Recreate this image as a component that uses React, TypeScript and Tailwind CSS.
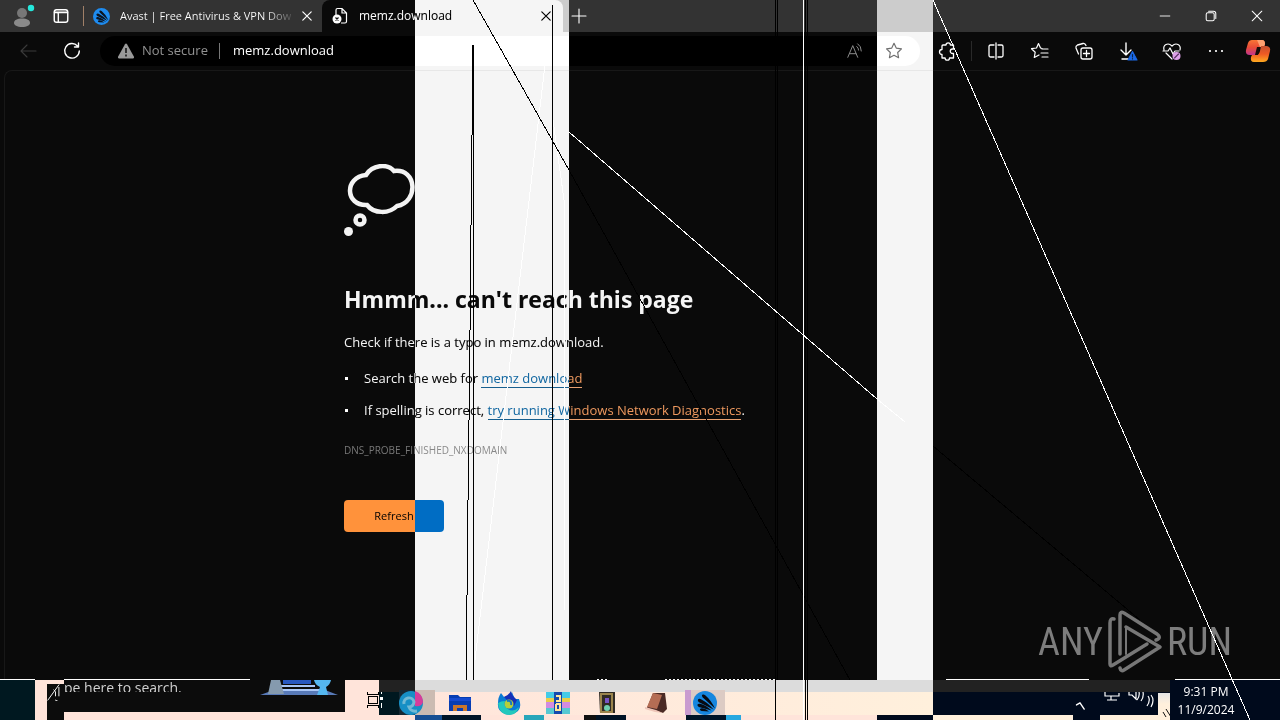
import type { ReactNode } from "react";

type IconProps = { children: ReactNode; size?: number; className?: string };

function Icon({ children, size = 20, className = "" }: IconProps) {
  return (
    <svg
      width={size}
      height={size}
      viewBox="0 0 20 20"
      fill="none"
      stroke="currentColor"
      strokeWidth="1.1"
      strokeLinecap="round"
      strokeLinejoin="round"
      className={`shrink-0 ${className}`}
      aria-hidden="true"
    >
      {children}
    </svg>
  );
}

function AvastMark({ size, fill, wing }: { size: number; fill: string; wing: string }) {
  return (
    <svg width={size} height={size} viewBox="0 0 24 24" aria-hidden="true" className="shrink-0">
      <circle cx="12" cy="12" r="12" fill={fill} />
      <g fill={wing}>
        <path d="M22 17.500L9.500 6.200Q8.200 4.500 9.600 3.600Q10.800 3 12.200 4.200Q18 9 22 17.500Z" />
        <path d="M20.500 18.500L6 11.200Q4.200 9.800 5 8.400Q6 7.200 8 8.200Q15 11.500 20.500 18.500Z" />
        <path d="M18.500 19.500L5.800 16Q4 15 4.500 13.600Q5.300 12.300 7.200 12.800Q13.500 14.500 18.500 19.500Z" />
        <path d="M16 20.500L8.500 20Q6.700 19.500 6.900 18.300Q7.500 17.100 9.200 17.300Q13 17.800 16 20.500Z" />
      </g>
    </svg>
  );
}

function TabStrip() {
  return (
    <header className="flex h-8 items-center bg-[#333333] text-xs text-white">
      <div className="flex h-full w-[83px] shrink-0 items-center gap-6 pl-3">
        <button aria-label="Profile" className="h-6 w-6">
          <svg width="24" height="24" viewBox="0 0 24 24">
            <circle cx="10" cy="9" r="5" fill="#777" />
            <path d="M2 19c0-3 3-4.500 8-4.500s8 1.500 8 4.500c0 2-3 4-8 4s-8-2-8-4z" fill="#8a8a8a" />
            <circle cx="19" cy="4" r="3.200" fill="#25e8dc" />
          </svg>
        </button>
        <button aria-label="Tab actions">
          <Icon size={18} className="-ml-2">
            <rect x="2.500" y="3" width="15" height="14" rx="2.500" strokeWidth="1.600" />
            <path d="M3 6h14" strokeWidth="2" />
            <path d="M7 7v10" strokeWidth="1.500" />
          </Icon>
        </button>
      </div>
      <div className="flex h-full w-[239px] shrink-0 items-center">
        <span className="h-5 w-px bg-[#a08068]" />
        <a href="#avast" className="flex min-w-0 flex-1 items-center gap-[10px] pl-[9px]">
          <AvastMark size={17} fill="#1e8cf0" wing="#0c1420" />
          <span className="whitespace-nowrap bg-gradient-to-r from-white from-85% to-[#555555] bg-clip-text text-[11px] text-transparent">
            Avast | Free Antivirus &amp; VPN Dow
          </span>
        </a>
        <button aria-label="Close Avast tab" className="mr-2">
          <Icon size={14}>
            <path d="M4 4l12 12M16 4L4 16" strokeWidth="1.700" />
          </Icon>
        </button>
      </div>
      <div className="flex h-full w-[241px] shrink-0 items-center rounded-t-lg bg-[#0a0a0a] pl-[10px]">
        <a href="#memz" className="flex flex-1 items-center gap-[10px]">
          <svg width="17" height="18" viewBox="0 0 17 18" fill="none" stroke="white" strokeWidth="1.200" aria-hidden="true">
            <path d="M4 8V3q0-1.500 1.500-1.500H10L14.500 6v8.500q0 1.500-1.500 1.500H9M10 1.500V6h4.500" />
            <circle cx="5" cy="12" r="4.500" fill="white" stroke="none" />
            <path d="M3.500 10.500l3 3m0-3l-3 3" stroke="#111" />
          </svg>
          memz.download
        </a>
        <button aria-label="Close tab" className="mr-[10px]">
          <Icon size={14}>
            <path d="M4 4l12 12M16 4L4 16" strokeWidth="1.700" />
          </Icon>
        </button>
      </div>
      <button aria-label="New tab" className="ml-[6px]">
        <Icon>
          <path d="M10 3v14M3 10h14" />
        </Icon>
      </button>
      <div className="ml-auto flex items-center gap-[30px] pr-[15px]">
        <button aria-label="Minimize">
          <Icon size={16}>
            <path d="M4 10h12" />
          </Icon>
        </button>
        <button aria-label="Restore">
          <Icon size={16}>
            <rect x="4" y="6" width="10" height="10" rx="2" strokeWidth="1.300" />
            <path d="M7 4h6q3 0 3 3v6" strokeWidth="1.300" />
          </Icon>
        </button>
        <button aria-label="Close window">
          <Icon size={16}>
            <path d="M4 4l12 12M16 4L4 16" strokeWidth="1.300" />
          </Icon>
        </button>
      </div>
    </header>
  );
}

function Toolbar() {
  return (
    <div className="flex h-[38px] items-center bg-[#0a0a0a] text-white">
      <button aria-label="Back" className="ml-[18px] text-[#3b3b3b]">
        <Icon>
          <path d="M18 10H3M9 4l-6 6 6 6" />
        </Icon>
      </button>
      <button aria-label="Reload" className="ml-6">
        <Icon>
          <path d="M15.500 5A7.300 7.300 0 1 0 17.300 10M16.500 2v4h-4" strokeWidth="1.400" />
        </Icon>
      </button>
      <form className="ml-[18px] flex h-[30px] flex-1 items-center rounded-full bg-black pl-[17px]">
        <svg width="18" height="18" viewBox="0 0 18 18" aria-hidden="true">
          <path d="M9 1.500Q9.600 1.500 10 2.200L17 14.700Q17.400 16.200 16 16.500H2Q.6 16.200 1 14.700L8 2.200Q8.400 1.500 9 1.500Z" fill="#9a9a9a" />
          <path d="M9 6v5M9 12.500v2" stroke="#111" strokeWidth="1.500" />
        </svg>
        <span className="ml-[7px] w-[68px] whitespace-nowrap text-[13px] text-[#929292]">Not secure</span>
        <span className="ml-[9px] h-4 w-px bg-[#777]" />
        <input
          aria-label="Address"
          defaultValue="memz.download"
          className="ml-[13px] min-w-0 flex-1 bg-transparent text-[13px] outline-none"
        />
        <button type="button" aria-label="Read aloud" className="text-[#8c8c8c]">
          <Icon size={18}>
            <path d="M2 17L7.500 4L13 17M4 13h7" />
            <path d="M12 5q2 1.500 2 4M13 2q4 2.500 4 8" />
          </Icon>
        </button>
        <button type="button" aria-label="Add to favorites" className="ml-[21px] mr-[17px] text-[#919191]">
          <Icon size={18}>
            <path d="M10 1.500l2.500 5.300 5.800.8-4.200 4.100 1 5.800L10 14.800l-5.100 2.700 1-5.800L1.700 7.600l5.800-.8z" strokeWidth="1.300" />
          </Icon>
        </button>
      </form>
      <div className="ml-[18px] flex shrink-0 items-center pr-[9px]">
        <button aria-label="Extensions">
          <Icon>
            <path d="M5 4h3a2.200 2.200 0 0 1 4.400 0H15.500v4h-1a2 2 0 0 0 0 4.500h1V17h-4a2.200 2.200 0 0 1-4.400 0H4v-3.500a2.400 2.400 0 0 1 0-5V5q0-1 1-1z" strokeWidth="1.300" />
          </Icon>
        </button>
        <span className="ml-[13px] h-5 w-px bg-[#292929]" />
        <button aria-label="Split screen" className="ml-[14px]">
          <Icon>
            <path d="M8 4H4.500Q3 4 3 5.500v9Q3 16 4.500 16H8M12 4h3.500Q17 4 17 5.500v9q0 1.500-1.500 1.500H12M10 2v16" strokeWidth="1.300" />
          </Icon>
        </button>
        <button aria-label="Favorites" className="ml-6">
          <Icon>
            <path d="M12 7.500L10.500 7 8.500 2.500 6.500 7l-5 .7 3.700 3.500L4.300 16.500 9 14M12 8h6M11 12h7M12 16h6" strokeWidth="1.200" />
          </Icon>
        </button>
        <button aria-label="Collections" className="ml-6">
          <Icon>
            <rect x="7" y="7" width="11" height="11" rx="2" strokeWidth="1.300" />
            <path d="M12.500 9.500v6M9.500 12.500h6M4.500 13L2 7Q1.500 5 3.500 4L9 2.500Q11 2 12 4.500" strokeWidth="1.300" />
          </Icon>
        </button>
        <button aria-label="Downloads" className="ml-6">
          <Icon>
            <path d="M8 2v12M3 9l5 5 5-5M4 18h6" strokeWidth="1.400" />
            <path d="M14.500 10.500L19 19h-9z" fill="#1b68e4" stroke="#1b68e4" />
            <path d="M14.500 13.500v2.500M14.500 17.500v.5" stroke="#0a2448" />
          </Icon>
        </button>
        <button aria-label="Browser essentials" className="ml-6">
          <Icon>
            <path d="M2 9Q1 5 4 3.500T10 5q3-3 6-1.500T18 9M1 10h5l2-3 3 6 2-3h4M4 12l6 6" strokeWidth="1.200" />
            <circle cx="14.500" cy="15" r="4" fill="#dda0e8" stroke="none" />
            <path d="M12.500 17l4-4" stroke="#553060" />
          </Icon>
        </button>
        <button aria-label="More" className="ml-6">
          <Icon>
            <path d="M4 10h.01M10 10h.01M16 10h.01" strokeWidth="2.200" />
          </Icon>
        </button>
        <button aria-label="Copilot" className="ml-[19px]">
          <svg width="26" height="24" viewBox="0 0 26 24">
            <defs>
              <linearGradient id="warm" x2="0" y2="1">
                <stop stopColor="#f87535" />
                <stop offset="0.500" stopColor="#e84b38" />
                <stop offset="1" stopColor="#c0358e" />
              </linearGradient>
              <linearGradient id="gold" x2="0" y2="1">
                <stop stopColor="#c5502f" />
                <stop offset="0.500" stopColor="#ef5a24" />
                <stop offset="1" stopColor="#ffaa20" />
              </linearGradient>
            </defs>
            <path d="M7 1H17Q20 1 20 5L19 8H16Q13 8 12 12L11 16H5Q0 16 1 11L3 4Q4 1 7 1Z" fill="url(#warm)" />
            <path d="M12 1h5q3 0 3 4l-1 3h-4z" fill="#ffa070" />
            <path d="M16 7h6q4 1 3 5l-2 8q-1 3-5 3H9q-4 0-3-5l1-2h4q3 0 4-4z" fill="url(#gold)" />
            <path d="M12 8h3l-2 8h-3z" fill="#180c08" />
          </svg>
        </button>
      </div>
    </div>
  );
}

function ErrorPage() {
  const link = "border-b border-[#e8a070] text-[#ee995f]";
  const bullet = "ml-px mr-[16px] h-[3px] w-[3px] bg-white";
  return (
    <main className="ml-1 flex-1 rounded-tl-lg border-l border-t border-[#181818] bg-[#0a0a0a] pl-[11px] pr-4 pt-[93px] text-[#f5f5f5]">
      <div className="mx-auto w-full max-w-[592px] text-[13px]">
        <svg width="74" height="74" viewBox="0 0 74 74" fill="none" stroke="#f3f3f3" strokeWidth="4.500" aria-hidden="true">
          <path d="M22 11C28 1 43-1 50 7C73 4 75 38 53 42C45 50 30 50 23 41C1 42 0 13 22 11Z" />
          <circle cx="16" cy="56" r="4.500" />
          <circle cx="4.500" cy="67.500" r="4.500" fill="#f3f3f3" stroke="none" />
        </svg>
        <h1 className="mt-[45px] whitespace-nowrap text-[23px] font-bold leading-8">Hmmm... can't reach this page</h1>
        <p className="mt-[17px] leading-5">Check if there is a typo in memz.download.</p>
        <ul className="mt-4 space-y-3">
          <li className="flex items-center leading-5">
            <span className={bullet} />
            <span>
              Search the web for{" "}
              <a href="#search" className={link}>memz download</a>
            </span>
          </li>
          <li className="flex items-center leading-5">
            <span className={bullet} />
            <span>
              If spelling is correct,{" "}
              <a href="#diagnostics" className={link}>try running Windows Network Diagnostics</a>.
            </span>
          </li>
        </ul>
        <p className="mt-[22px] text-[10px] leading-4 text-[#777]">DNS_PROBE_FINISHED_NXDOMAIN</p>
        <button className="mt-[42px] h-8 w-[100px] rounded-sm bg-[#ff923b] text-[11px] text-black">Refresh</button>
      </div>
    </main>
  );
}

function Watermark() {
  return (
    <div className="absolute bottom-[46px] right-[48px] flex items-center gap-1 font-['Roboto_Condensed','Liberation_Sans_Narrow',sans-serif] text-[38px] leading-none text-[#7d7d7d]">
      <span>ANY</span>
      <svg width="56" height="64" viewBox="0 0 56 64" fill="none" stroke="#777" strokeWidth="3.500" strokeLinejoin="round" strokeLinecap="round" aria-hidden="true">
        <path d="M7 9Q3 8 3 13V54Q3 57 6 55L40 34" />
        <path d="M13 44V5Q13 1 17 3L50 24Q55 28 49 30" />
        <path d="M19 17L53 37L17 60Q14 62 13 58" />
        <path d="M19 17V44" strokeWidth="2" />
      </svg>
      <span>RUN</span>
    </div>
  );
}

function Glitch() {
  return (
    <>
      <div className="pointer-events-none absolute bottom-10 left-[415px] top-0 w-[154px] bg-white mix-blend-difference" />
      <div className="pointer-events-none absolute bottom-10 left-[877px] top-0 w-14 bg-white mix-blend-difference" />
      <svg
        className="pointer-events-none absolute left-0 top-0"
        width="1280"
        height="720"
        viewBox="0 0 1280 720"
        fill="none"
        stroke="black"
        strokeWidth="1"
        shapeRendering="crispEdges"
        aria-hidden="true"
      >
        <path d="M545 65L475 660M553 120L564 200V610" stroke="white" />
        <path d="M473 0L569 170L850 680M473.500 45V680M470.500 225V330M469.500 330V420M468.500 420V500M467.500 500V595M466.500 595V680M471.500 135V225M552.500 5V680" />
        <path d="M473 45V135" strokeWidth="2" />
        <path d="M775.500 0V720M777.500 0V680M805.500 0V720M807.500 0V720M933 446L1140 620" />
        <path d="M569 132L877 399L905 422M933 0L1250 720M803.500 0V720" stroke="white" />
        <path d="M0 679.500H35M64 679.500H250M946 679.500H1089M1175 679.500H1280" stroke="white" />
        <path d="M597 679.500H609M665 679.500H775" stroke="white" strokeDasharray="2 2" />
      </svg>
    </>
  );
}

function TaskIcons() {
  const item = "flex h-[25px] w-9 items-center justify-center";
  return (
    <div className="flex gap-[13px]">
      <button aria-label="Edge" className="-mr-[6px] flex h-[25px] w-9 items-center bg-gradient-to-r from-[#172832] from-45% to-[#cbbbb2] to-45%">
        <svg width="24" height="24" viewBox="0 0 24 24">
          <circle cx="12" cy="12" r="12" fill="#168fc5" />
          <path d="M16 0q8 3 8 11-1 5-8 4z" fill="#d53d9b" />
          <path d="M5 13a5 5 0 0 1 10-2q-1 5-5 5 2 5 8 4" stroke="#72bad5" strokeWidth="3" fill="none" />
        </svg>
      </button>
      <button aria-label="File Explorer" className={item}>
        <svg width="22" height="20" viewBox="0 0 22 20">
          <path d="M0 2h9l2 2h11v14H0z" fill="#073db2" />
          <path d="M0 5h22v3H0z" fill="#164bd0" />
          <path d="M4 18v-6h14v6h-4v-3H8v3z" fill="#c8762b" />
        </svg>
      </button>
      <button aria-label="Firefox" className={item}>
        <svg width="24" height="24" viewBox="0 0 24 24">
          <path d="M1 12Q1 6 4 2l3 4q4 0 8-5 2 6 4 7l3 0q3 8-1 12-6 5-13 3Q0 20 1 12Z" fill="#087bd4" />
          <path d="M1 12q1 12 12 12 7-1 9-8-6 6-11 2-5-3-3-8-4 0-7 2Z" fill="#23c8bc" />
          <path d="M7 6q4-1 7-6 0 4 6 9l-3 6-7-6z" fill="#162fb8" />
          <circle cx="12" cy="13" r="4.500" fill="#b5cf39" />
          <path d="M10 10q5-1 4 4" stroke="#1679c1" strokeWidth="2" fill="none" />
        </svg>
      </button>
      <button aria-label="Archive" className={item}>
        <svg width="24" height="22" viewBox="0 0 24 22">
          <path fill="#44cbe7" d="M0 0h24v7H0z" />
          <path fill="#e9ce49" d="M0 6h24v4H0z" />
          <path fill="#d38be1" d="M0 10h24v6H0z" />
          <path fill="#58c8d2" d="M0 16h24v6H0z" />
          <path fill="#1549ad" d="M8 0h8v22H8z" />
          <path d="M10 4h4v5h-4M10 12h4v6h-4v-6" stroke="#ffe49b" strokeWidth="2" fill="none" />
        </svg>
      </button>
      <button aria-label="Utility" className={item}>
        <svg width="18" height="22" viewBox="0 0 18 22">
          <path fill="#302b25" d="M1 0h16v21H2z" />
          <path d="M3 2h11v18H3z" fill="none" stroke="#9b854d" strokeWidth="2" />
          <path d="M7 6h4v5H7z" fill="#7854c5" />
          <circle cx="9" cy="16" r="3" fill="#70d1b0" />
        </svg>
      </button>
      <button aria-label="Notes" className={item}>
        <svg width="24" height="22" viewBox="0 0 24 22">
          <path fill="#4b2a25" d="M9 1h12l2 16-4 4L3 16z" />
          <path fill="#b56d54" d="M9 1l9 2-5 14-10-2z" />
          <path fill="#efc5b8" d="M1 15l11 3 7 3-8-1L1 17z" />
        </svg>
      </button>
      <button aria-label="Avast" className="-ml-[2px] flex h-[25px] w-10 items-center justify-center bg-gradient-to-r from-[#c99bd0] from-15% to-[#dccbc4] to-15%">
        <AvastMark size={24} fill="#1686df" wing="#080b12" />
      </button>
    </div>
  );
}

function Taskbar() {
  return (
    <footer className="flex h-10 overflow-hidden bg-[#ffe4da] text-xs text-white">
      <div className="w-[35px] shrink-0 bg-[#001820]" />
      <div className="ml-3 w-[17px] shrink-0 pt-1">
        <div className="h-9 bg-[#0c0c0c]">
          <Icon size={17}>
            <path d="M1 19L14 1M8 7l2 2v5M14 4v10M10 19l4 2" />
          </Icon>
        </div>
      </div>
      <div className="flex h-8 w-[281px] shrink-0 items-start justify-between bg-[#0c0c0c]">
        <div className="h-[12px] overflow-hidden">
          <input
            aria-label="Search"
            placeholder="pe here to search."
            className="h-4 w-[140px] bg-transparent text-[14px] leading-4 placeholder:text-[#d0d0d0]"
          />
        </div>
        <svg width="80" height="28" viewBox="0 0 80 28" className="mr-[6px]" aria-hidden="true">
          <path d="M1 15L15 10h51l13 5z" fill="#587ab8" />
          <path d="M24 0h28v4H24z" fill="#2858c0" />
          <path d="M22 5h34v2H22zM18 9h44v2H18z" fill="#a9c6f6" />
          <path d="M12 0h9l4 14H9z" fill="#859aae" />
          <path d="M55 0h17q-1 5-5 7l2 8H58l3-8q-5-2-6-7z" fill="#55b7f0" />
        </svg>
      </div>
      <div className="flex w-[34px] shrink-0 items-end justify-end pb-3">
        <svg width="12" height="16" viewBox="0 0 12 16" fill="none" stroke="black" shapeRendering="crispEdges" aria-hidden="true">
          <path d="M.5 0v2.500h11V0M1.500 4.500h9v7h-9zM.5 16v-2.500h11V16" />
        </svg>
      </div>
      <div className="flex min-w-0 flex-1 flex-col">
        <div className="flex h-3 shrink-0">
          <div className="w-9 bg-[#222222]" />
          <div className="w-[518px] bg-[#dcdcdc]" />
          <div className="flex-1 bg-[#222222]" />
        </div>
        <div className="flex h-[23px]">
          <div className="w-9 shrink-0 bg-[#001820]">
            <svg width="6" height="20" viewBox="0 0 6 20" fill="white" aria-hidden="true">
              <path d="M1 5h3v3H1zM2 0h1v2H2zM2 11h1v5H2z" />
            </svg>
          </div>
          <div className="flex w-[518px] shrink-0 items-end bg-gradient-to-r from-[#ffe5db] to-[#fff0dc]">
            <div className="-ml-4">
              <TaskIcons />
            </div>
          </div>
          <div className="flex flex-1 items-start justify-end bg-[#000a1c]">
            <button aria-label="Show hidden icons" className="mr-[14px] mt-2">
              <Icon size={14}>
                <path d="M5 7l5-3 6 9" strokeWidth="2" />
              </Icon>
            </button>
            <svg width="56" height="20" viewBox="0 0 56 20" fill="none" stroke="white" strokeWidth="1.200" className="mr-[13px]" aria-hidden="true">
              <path d="M4 0v4h14V1M10 4v4M6 8h10M28 0v3h3l4 4V0M38 0q1 4-2 8M42 0q1 5-2 9M47 4q3 4-1 10M50 3q4 5 0 12" />
            </svg>
          </div>
        </div>
        <div className="flex h-[5px] shrink-0">
          <div className="w-9" />
          <div className="w-[27px] bg-[#174f93]" />
          <div className="w-[39px] bg-[#001326]" />
          <div className="w-[43px]" />
          <div className="w-[20px] bg-[#28a6ba]" />
          <div className="w-[40px]" />
          <div className="w-[12px] bg-[#101010]" />
          <div className="w-[30px] bg-[#001326]" />
          <div className="w-[60px]" />
          <div className="w-[40px] bg-[#001326]" />
          <div className="w-[15px] bg-[#28a8e0]" />
          <div className="w-[136px]" />
          <div className="w-14 bg-[#000a1c]" />
          <div className="w-[140px] bg-[#fff0dc]" />
          <div className="w-[27px] bg-[#000a1c]" />
          <div className="flex-1 bg-[#fff0dc]" />
        </div>
      </div>
      <div className="-ml-3 mt-[13px] w-[15px] shrink-0 bg-gradient-to-b from-[#e5e5e5] to-[#fff0dc] to-40%">
        <svg width="15" height="27" viewBox="0 0 15 27" fill="none" stroke="#111" aria-hidden="true">
          <path d="M5 19l3 5M8 16l5 8" />
        </svg>
      </div>
      <div className="-ml-[3px] w-[110px] shrink-0 bg-[#000a1c] pr-[38px] pt-[3px] text-center text-xs leading-[18px]">
        <div>9:31 PM</div>
        <div>11/9/2024</div>
      </div>
    </footer>
  );
}

export default function App() {
  return (
    <div className="relative isolate flex min-h-screen flex-col overflow-hidden bg-[#0a0a0a] font-['Open_Sans','Noto_Sans',sans-serif]">
      <TabStrip />
      <Toolbar />
      <ErrorPage />
      <Taskbar />
      <Watermark />
      <Glitch />
    </div>
  );
}
